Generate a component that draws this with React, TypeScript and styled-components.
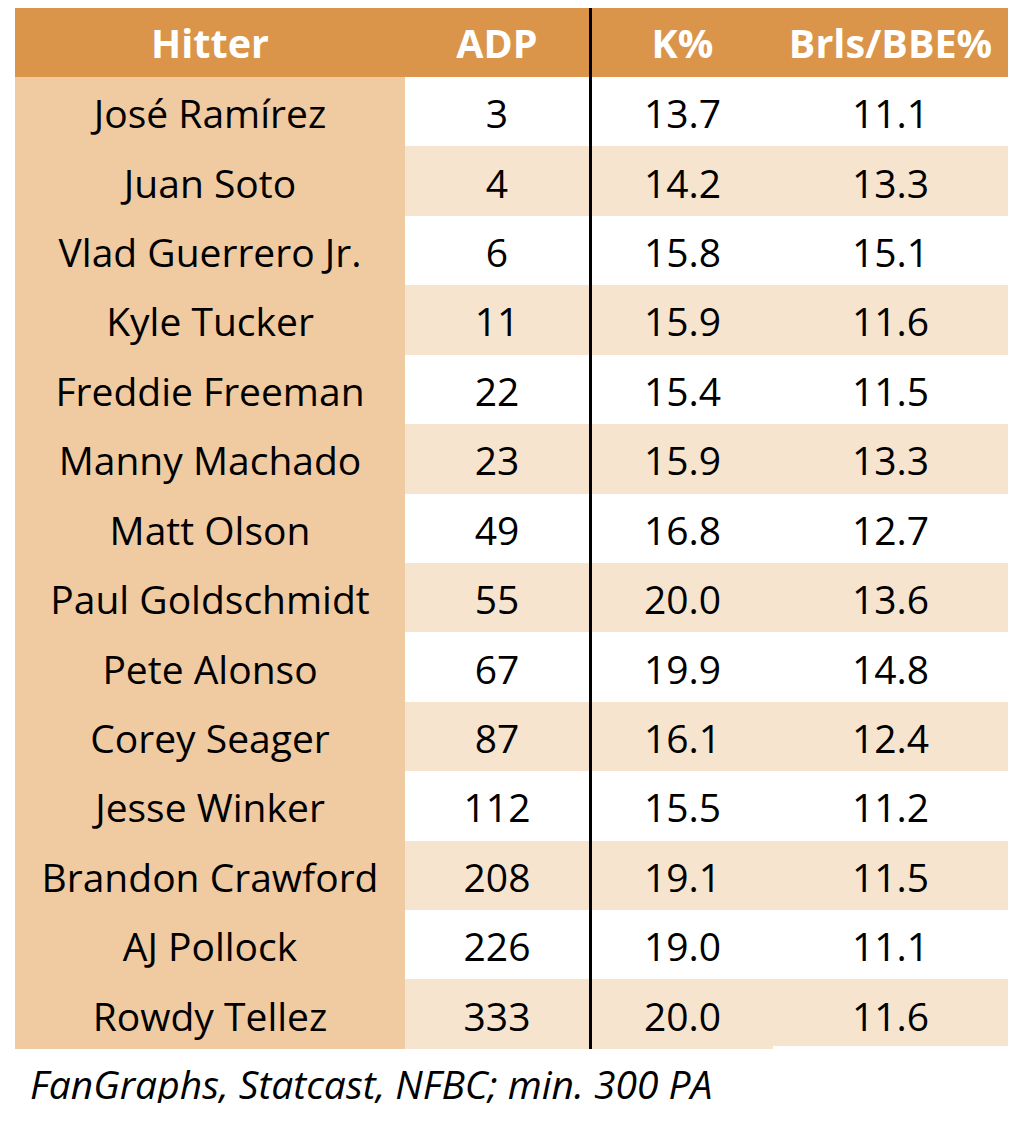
import React from "react";
import styled, { createGlobalStyle } from "styled-components";

const Global = createGlobalStyle`
  html, body { margin: 0; padding: 0; background: #ffffff; }
  body { font-family: "Open Sans", "Noto Sans", sans-serif; }
`;

const Page = styled.div`
  padding: 8px 9px 0 15px;
`;

const Table = styled.div`
  display: grid;
  grid-template-columns: 390px 187px 181px 235px;
  grid-template-rows: 69px repeat(14, 69.43px);
`;

const HeadCell = styled.div<{ $divider?: boolean }>`
  background: #da954b;
  color: #ffffff;
  font-weight: 700;
  font-size: 39.5px;
  line-height: 1;
  padding-top: 3px;
  display: flex;
  align-items: center;
  justify-content: center;
  box-sizing: border-box;
  border-right: ${(p) => (p.$divider ? "3px solid #000" : "none")};
`;

const Cell = styled.div<{ $bg: string; $divider?: boolean; $short?: boolean }>`
  background: ${(p) => p.$bg};
  color: #000;
  font-size: 39px;
  line-height: 1;
  padding-top: 2px;
  display: flex;
  align-items: center;
  justify-content: center;
  box-sizing: border-box;
  border-right: ${(p) => (p.$divider ? "3px solid #000" : "none")};
  ${(p) => (p.$short ? "align-self: start; height: calc(100% - 3px); padding-top: 5px;" : "")}
`;

const Note = styled.div`
  font-style: italic;
  font-size: 39px;
  line-height: 1;
  color: #000;
  padding-left: 15px;
  margin-top: 15px;
`;

const rows: [string, string, string, string][] = [
  ["José Ramírez", "3", "13.7", "11.1"],
  ["Juan Soto", "4", "14.2", "13.3"],
  ["Vlad Guerrero Jr.", "6", "15.8", "15.1"],
  ["Kyle Tucker", "11", "15.9", "11.6"],
  ["Freddie Freeman", "22", "15.4", "11.5"],
  ["Manny Machado", "23", "15.9", "13.3"],
  ["Matt Olson", "49", "16.8", "12.7"],
  ["Paul Goldschmidt", "55", "20.0", "13.6"],
  ["Pete Alonso", "67", "19.9", "14.8"],
  ["Corey Seager", "87", "16.1", "12.4"],
  ["Jesse Winker", "112", "15.5", "11.2"],
  ["Brandon Crawford", "208", "19.1", "11.5"],
  ["AJ Pollock", "226", "19.0", "11.1"],
  ["Rowdy Tellez", "333", "20.0", "11.6"],
];

const NAME_BG = "#f0caa0";
const STRIPE = "#f6e4cf";

export default function App() {
  return (
    <Page>
      <Global />
      <Table>
        <HeadCell>Hitter</HeadCell>
        <HeadCell $divider>ADP</HeadCell>
        <HeadCell>K%</HeadCell>
        <HeadCell>Brls/BBE%</HeadCell>
        {rows.map((r, i) => {
          const bg = i % 2 === 1 ? STRIPE : "#ffffff";
          const last = i === rows.length - 1;
          return (
            <React.Fragment key={r[0]}>
              <Cell $bg={NAME_BG}>{r[0]}</Cell>
              <Cell $bg={bg} $divider>{r[1]}</Cell>
              <Cell $bg={bg}>{r[2]}</Cell>
              <Cell $bg={bg} $short={last}>{r[3]}</Cell>
            </React.Fragment>
          );
        })}
      </Table>
      <Note>FanGraphs, Statcast, NFBC; min. 300 PA</Note>
    </Page>
  );
}
